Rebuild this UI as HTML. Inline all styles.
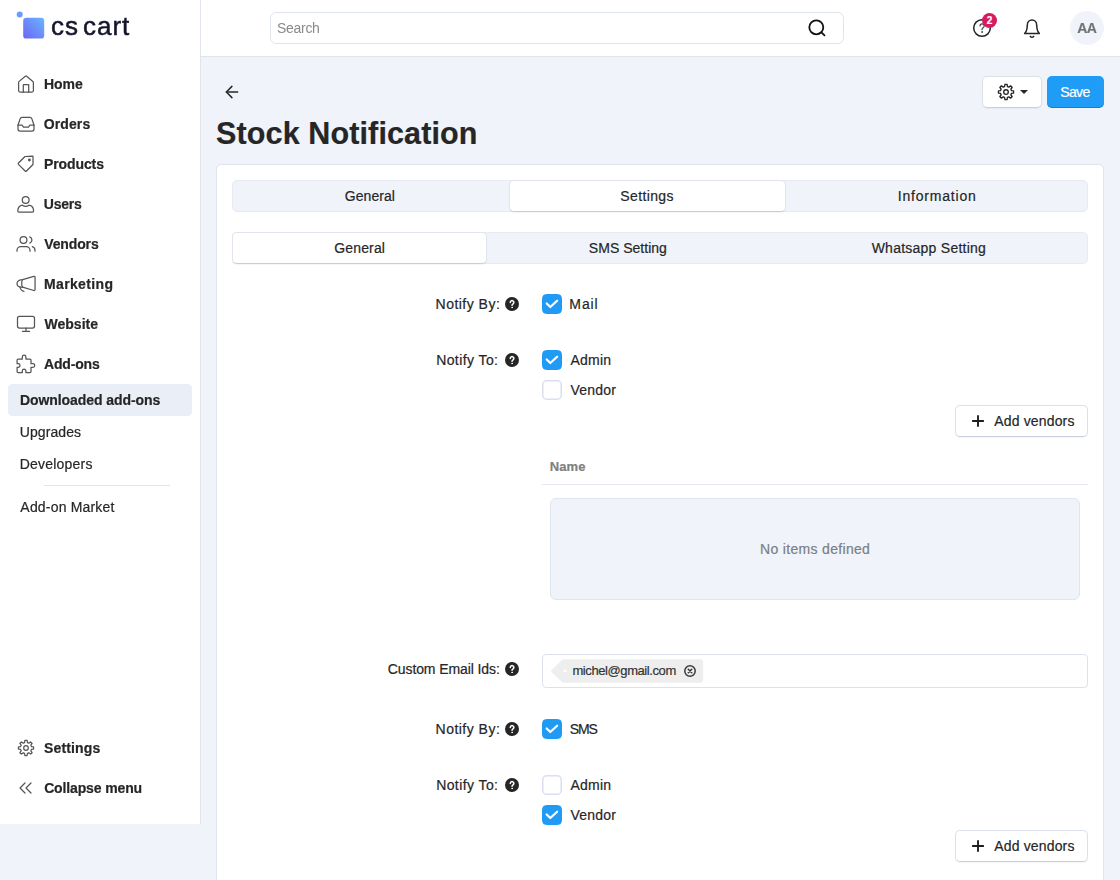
<!DOCTYPE html>
<html><head><meta charset="utf-8"><title>Stock Notification</title>
<style>
*{box-sizing:border-box;margin:0;padding:0}
html,body{width:1120px;height:880px;overflow:hidden;background:#f0f4fa;font-family:"Liberation Sans",sans-serif;color:#262626;font-size:14px}
#side{position:absolute;left:0;top:0;width:201px;height:824px;background:#fff;border-right:1px solid #e1e5eb}
#top{position:absolute;left:201px;top:0;width:919px;height:57px;background:#fff;border-bottom:1px solid #e1e5eb}
.g{will-change:transform}
.t{position:absolute;white-space:nowrap;line-height:20px;font-size:14px;color:#262626;-webkit-text-stroke:.2px}
.b{font-weight:bold}
.ico{position:absolute;width:24px;height:24px}
.ico svg{position:absolute;left:0;top:0;width:24px;height:24px;fill:none;stroke:#555;stroke-width:1.25;stroke-linecap:round;stroke-linejoin:round;overflow:visible}
#search{position:absolute;left:270px;top:12px;width:574px;height:32px;border:1px solid #e0e4eb;border-radius:6px;background:#fff}
.btn{position:absolute;border:1px solid #dbe0e9;border-bottom-color:#c9d0dc;border-radius:5px;background:#fff;box-shadow:0 1px 1px rgba(40,60,100,.05)}
#card{position:absolute;left:216px;top:164px;width:888px;height:730px;background:#fff;border:1px solid #e1e5ec;border-radius:5px}
.tabs{position:absolute;left:232px;width:856px;height:32px;background:#f0f4fa;border:1px solid #e7eaf0;border-radius:5px}
.tabon{position:absolute;height:32px;background:#fff;border:1px solid #e0e4ec;border-bottom-color:#c6cedb;border-radius:5px;box-shadow:0 1px 1px rgba(40,60,100,.05)}
.q{position:absolute;width:14px;height:14px;border-radius:50%;background:#262626}
.q svg{position:absolute;left:0;top:0;width:14px;height:14px}
.cb{position:absolute;left:542px;width:20px;height:20px;border-radius:4.5px;border:1.5px solid #d6dced;background:#fff}
.cb.on{background:#1f9bf5;border-color:#1f9bf5}
.cb svg{position:absolute;left:-1.5px;top:-1.5px;width:20px;height:20px;fill:none;stroke:#fff;stroke-width:2.2;stroke-linecap:round;stroke-linejoin:round}
</style></head><body>
<div id="side"></div><div id="top"></div>
<svg style="position:absolute;left:14px;top:8px" width="36" height="36" viewBox="0 0 36 36"><defs><linearGradient id="lg" x1="0" y1="1" x2="1" y2="0"><stop offset="0" stop-color="#6b66f6"/><stop offset="1" stop-color="#6bb4ff"/></linearGradient></defs><circle cx="5.7" cy="6.4" r="3" fill="#6c9bfb"/><rect x="9.2" y="9.8" width="21" height="20.8" rx="3.2" fill="url(#lg)"/></svg>
<div class="t g" id="logo" style="left:51px;top:11px;font-size:26px;line-height:30px;color:#14162b;letter-spacing:.95px;word-spacing:-4px;-webkit-text-stroke:.5px #14162b">cs cart</div>
<div class="ico" style="left:14px;top:72px"><svg viewBox="0 0 24 24"><path d="M4.6 10.6 a1.6 1.6 0 0 1 .55 -1.2 L11.3 4.2 a1 1 0 0 1 1.4 0 L18.85 9.4 a1.6 1.6 0 0 1 .55 1.2 V18.6 a1.5 1.5 0 0 1 -1.5 1.5 H6.1 a1.5 1.5 0 0 1 -1.5 -1.5 Z"/><path d="M9.3 20 V13 a.4 .4 0 0 1 .4 -.4 h4.6 a.4 .4 0 0 1 .4 .4 V20"/></svg></div>
<div class="t b g" style="left:43px;padding-left:0.96px;top:74px;letter-spacing:-0.060px;">Home</div>
<div class="ico" style="left:14px;top:112px"><svg viewBox="0 0 24 24"><path d="M4 13 L6.2 6.6 A2 2 0 0 1 8.1 5.3 H15.9 A2 2 0 0 1 17.8 6.6 L20 13 V17 a2 2 0 0 1 -2 2 H6 a2 2 0 0 1 -2 -2 Z"/><path d="M4 13 H8 l1.5 2.2 h5 L16 13 H20"/></svg></div>
<div class="t b g" style="left:43px;padding-left:0.83px;top:114px;letter-spacing:0.088px;">Orders</div>
<div class="ico" style="left:14px;top:152px"><svg viewBox="0 0 24 24"><g transform="translate(0,-1)"><path d="M4.5 12 L11 5.5 L18.4 5.2 a.6 .6 0 0 1 .6 .6 V13.5 L12.5 20 a1 1 0 0 1 -1.4 0 L4.5 13.4 a1 1 0 0 1 0 -1.4 Z"/><circle cx="15.4" cy="9" r="0.8" fill="#555"/></g></svg></div>
<div class="t b g" style="left:43px;padding-left:0.96px;top:154px;letter-spacing:-0.095px;">Products</div>
<div class="ico" style="left:14px;top:192px"><svg viewBox="0 0 24 24"><circle cx="11.7" cy="8" r="3.4"/><path d="M3.8 19 C3.8 16 5.8 13.7 8.4 13.2 C10.3 14.5 13.1 14.5 15 13.2 C17.6 13.7 19.6 16 19.6 19 a1.1 1.1 0 0 1 -1.1 1.1 H4.9 a1.1 1.1 0 0 1 -1.1 -1.1 Z"/></svg></div>
<div class="t b g" style="left:43px;padding-left:0.76px;top:194px;letter-spacing:-0.200px;">Users</div>
<div class="ico" style="left:14px;top:232px"><svg viewBox="0 0 24 24"><circle cx="9.5" cy="8" r="3.4"/><path d="M3 19.2 v-.9 a3.8 3.8 0 0 1 3.8 -3.8 h5.4 a3.8 3.8 0 0 1 3.8 3.8 V19.2"/><path d="M15.8 4.8 a3.4 3.4 0 0 1 0 6.3"/><path d="M21 19.2 v-.9 a3.9 3.9 0 0 0 -2.7 -3.6"/></svg></div>
<div class="t b g" style="left:44px;padding-left:0.20px;top:234px;letter-spacing:-0.124px;">Vendors</div>
<div class="ico" style="left:14px;top:272px"><svg viewBox="0 0 24 24"><path d="M8.6 7.6 L19.8 4.4 a1 1 0 0 1 1.25 1 V17.5 a1 1 0 0 1 -1.25 1 L8.6 15.2 C5.2 15.2 3 13.6 3 11.4 C3 9.2 5.2 7.6 8.6 7.6 Z"/><path d="M8.6 7.6 C7.4 9.2 7.4 13.6 8.6 15.2"/><path d="M6 15 C6.4 17.3 7.8 18.9 9.9 19.3"/></svg></div>
<div class="t b g" style="left:43px;padding-left:0.96px;top:274px;letter-spacing:0.369px;">Marketing</div>
<div class="ico" style="left:14px;top:312px"><svg viewBox="0 0 24 24"><rect x="3.5" y="4.4" width="17" height="11.6" rx="2"/><path d="M8.5 19.4 h7"/><path d="M12 16 V19.4"/></svg></div>
<div class="t b g" style="left:44px;padding-left:0.39px;top:314px;letter-spacing:0.053px;">Website</div>
<div class="ico" style="left:14px;top:352px"><svg viewBox="0 0 24 24"><path d="M4.1 7.1 H8.3 V5 a1.8 1.8 0 0 1 3.6 0 V7.1 H16 a1 1 0 0 1 1 1 V11.7 H18.9 a1.8 1.8 0 0 1 0 3.6 H17 V19.6 a1 1 0 0 1 -1 1 H11.9 V19 a1.8 1.8 0 0 0 -3.6 0 V20.6 H4.1 a1 1 0 0 1 -1 -1 V15.3 H4.2 a1.8 1.8 0 0 0 0 -3.6 H3.1 V8.1 a1 1 0 0 1 1 -1 Z"/></svg></div>
<div class="t b g" style="left:44px;padding-left:0.05px;top:354px;letter-spacing:-0.190px;">Add-ons</div>
<div class="ico" style="left:14px;top:736px"><svg viewBox="0 0 24 24"><path d="M10.55 6.59L10.88 4.48A7.6 7.6 0 0 1 13.12 4.48L13.45 6.59A5.6 5.6 0 0 1 14.80 7.15L16.52 5.89A7.6 7.6 0 0 1 18.11 7.48L16.85 9.20A5.6 5.6 0 0 1 17.41 10.55L19.52 10.88A7.6 7.6 0 0 1 19.52 13.12L17.41 13.45A5.6 5.6 0 0 1 16.85 14.80L18.11 16.52A7.6 7.6 0 0 1 16.52 18.11L14.80 16.85A5.6 5.6 0 0 1 13.45 17.41L13.12 19.52A7.6 7.6 0 0 1 10.88 19.52L10.55 17.41A5.6 5.6 0 0 1 9.20 16.85L7.48 18.11A7.6 7.6 0 0 1 5.89 16.52L7.15 14.80A5.6 5.6 0 0 1 6.59 13.45L4.48 13.12A7.6 7.6 0 0 1 4.48 10.88L6.59 10.55A5.6 5.6 0 0 1 7.15 9.20L5.89 7.48A7.6 7.6 0 0 1 7.48 5.89L9.20 7.15A5.6 5.6 0 0 1 10.55 6.59Z"/><circle cx="12" cy="12" r="2.3"/></svg></div>
<div class="t b g" style="left:43px;padding-left:1.00px;top:738px;letter-spacing:0.136px;">Settings</div>
<div class="ico" style="left:14px;top:776px"><svg viewBox="0 0 24 24"><path d="M11 7 L6 12 L11 17"/><path d="M17 7 L12 12 L17 17"/></svg></div>
<div class="t b g" style="left:44px;padding-left:0.13px;top:778px;letter-spacing:-0.132px;">Collapse menu</div>
<div style="position:absolute;left:8px;top:384px;width:184px;height:32px;background:#eaeff7;border-radius:4.5px"></div>
<div class="t b g" style="left:19px;padding-left:0.96px;top:390px;letter-spacing:-0.067px;">Downloaded add-ons</div>
<div class="t g" style="left:19px;padding-left:0.82px;top:422px;letter-spacing:0.069px;">Upgrades</div>
<div class="t g" style="left:19px;padding-left:0.75px;top:454px;letter-spacing:0.205px;">Developers</div>
<div style="position:absolute;left:44px;top:485px;width:126px;height:1px;background:#dfe4ee"></div>
<div class="t g" style="left:20px;padding-left:0.37px;top:497px;letter-spacing:0.184px;">Add-on Market</div>
<div id="search"></div>
<div class="t g" style="left:276px;padding-left:0.96px;top:18px;letter-spacing:-0.283px;color:#8a8a8a;-webkit-text-stroke:0;">Search</div>
<svg style="position:absolute;left:805px;top:16px" width="24" height="24" viewBox="0 0 24 24" fill="none" stroke="#111" stroke-width="1.8" stroke-linecap="round"><circle cx="11.3" cy="11.3" r="7"/><path d="M16.4 16.4 L19.5 19.4"/></svg>
<svg style="position:absolute;left:970px;top:16px" width="24" height="24" viewBox="0 0 24 24" fill="none" stroke="#262626" stroke-width="1.5" stroke-linecap="round" stroke-linejoin="round"><circle cx="12" cy="12" r="8.3"/><path stroke-width="1.25" stroke="#444" d="M10 9.9 a2.1 2.1 0 1 1 3.2 1.8 c-.8 .5 -1.2 .9 -1.2 1.8"/><circle cx="12" cy="16" r=".5" fill="#444" stroke="#444" stroke-width=".8"/></svg>
<div style="position:absolute;left:982px;top:13px;width:15px;height:15px;border-radius:50%;background:#d81b60"></div>
<div class="t b" style="left:982px;top:13px;width:15px;text-align:center;font-size:10px;line-height:15px;color:#fff">2</div>
<svg style="position:absolute;left:1020px;top:16px" width="24" height="24" viewBox="0 0 24 24" fill="none" stroke="#262626" stroke-width="1.5" stroke-linecap="round" stroke-linejoin="round"><path d="M4.6 17.5 h14.8 c-1.3 -1.2 -2.1 -2.8 -2.4 -5 L16.6 8.5 a4.6 4.6 0 0 0 -9.2 0 L7 12.5 c-.3 2.2 -1.1 3.8 -2.4 5 Z"/><path d="M10.3 20.3 a2 2 0 0 0 3.4 0"/></svg>
<div style="position:absolute;left:1070px;top:11px;width:34px;height:34px;border-radius:50%;background:#f0f4fa"></div>
<div class="t b g" style="left:1077px;padding-left:0.15px;top:18px;letter-spacing:-0.403px;color:#727272;">AA</div>
<svg style="position:absolute;left:220px;top:80px" width="24" height="24" viewBox="0 0 24 24" fill="none" stroke="#262626" stroke-width="1.5" stroke-linecap="round" stroke-linejoin="round"><path d="M6.4 12 H17.6"/><path d="M11.9 6.4 L6.4 12 L11.9 17.6"/></svg>
<div class="btn" style="left:982px;top:76px;width:59.5px;height:32px"></div>
<svg style="position:absolute;left:994px;top:80px" width="24" height="24" viewBox="0 0 24 24" fill="none" stroke="#262626" stroke-width="1.35" stroke-linecap="round" stroke-linejoin="round"><path d="M10.55 6.59L10.88 4.48A7.6 7.6 0 0 1 13.12 4.48L13.45 6.59A5.6 5.6 0 0 1 14.80 7.15L16.52 5.89A7.6 7.6 0 0 1 18.11 7.48L16.85 9.20A5.6 5.6 0 0 1 17.41 10.55L19.52 10.88A7.6 7.6 0 0 1 19.52 13.12L17.41 13.45A5.6 5.6 0 0 1 16.85 14.80L18.11 16.52A7.6 7.6 0 0 1 16.52 18.11L14.80 16.85A5.6 5.6 0 0 1 13.45 17.41L13.12 19.52A7.6 7.6 0 0 1 10.88 19.52L10.55 17.41A5.6 5.6 0 0 1 9.20 16.85L7.48 18.11A7.6 7.6 0 0 1 5.89 16.52L7.15 14.80A5.6 5.6 0 0 1 6.59 13.45L4.48 13.12A7.6 7.6 0 0 1 4.48 10.88L6.59 10.55A5.6 5.6 0 0 1 7.15 9.20L5.89 7.48A7.6 7.6 0 0 1 7.48 5.89L9.20 7.15A5.6 5.6 0 0 1 10.55 6.59Z"/><circle cx="12" cy="12" r="2.3"/></svg>
<div style="position:absolute;left:1020px;top:90px;width:0;height:0;border-left:4.5px solid transparent;border-right:4.5px solid transparent;border-top:4.5px solid #262626"></div>
<div style="position:absolute;left:1047px;top:76px;width:57px;height:32px;border-radius:5px;background:#1f9cf6;box-shadow:inset 0 -1px 0 rgba(0,70,160,.35)"></div>
<div class="t" style="left:1060px;padding-left:0.16px;top:82px;letter-spacing:-0.584px;color:#fff;">Save</div>
<div class="t b" style="left:216px;padding-left:0.12px;top:112.5px;letter-spacing:0.118px;font-size:30.5px;line-height:40px;">Stock Notification</div>
<div id="card"></div>
<div class="tabs" style="top:180px"></div><div class="tabon" style="left:508.5px;top:180px;width:277px"></div>
<div class="t" style="left:344px;padding-left:0.80px;top:186px;letter-spacing:0.056px;">General</div>
<div class="t" style="left:620px;padding-left:0.36px;top:186px;letter-spacing:0.365px;">Settings</div>
<div class="t" style="left:897px;padding-left:0.81px;top:186px;letter-spacing:0.797px;">Information</div>
<div class="tabs" style="top:232px"></div><div class="tabon" style="left:232px;top:232px;width:254.5px"></div>
<div class="t" style="left:334px;padding-left:0.30px;top:238px;letter-spacing:0.139px;">General</div>
<div class="t" style="left:588px;padding-left:0.86px;top:238px;letter-spacing:0.022px;">SMS Setting</div>
<div class="t" style="left:871px;padding-left:0.64px;top:238px;letter-spacing:0.250px;">Whatsapp Setting</div>
<div class="t" style="left:435px;padding-left:0.55px;top:294px;letter-spacing:0.480px;">Notify By:</div>
<div class="q" style="left:505px;top:297px"><svg viewBox="0 0 14 14" fill="none" stroke="#fff" stroke-width="1.5" stroke-linecap="round" stroke-linejoin="round"><g transform="translate(7 7.5) scale(1.1) translate(-7 -7.5)"><path stroke-width="1.4" d="M5.45 5.6 a1.6 1.6 0 1 1 2.5 1.3 c-.55 .4 -.9 .7 -.9 1.2"/><circle cx="7.05" cy="10.1" r=".35" fill="#fff" stroke-width=".85"/></g></svg></div>
<div class="cb on" style="top:294px"><svg viewBox="0 0 20 20"><path d="M4.7 9.5 L8.3 13 L15.1 6.7"/></svg></div>
<div class="t" style="left:569px;padding-left:0.35px;top:294px;letter-spacing:0.905px;">Mail</div>
<div class="t" style="left:436px;padding-left:0.15px;top:350px;letter-spacing:0.414px;">Notify To:</div>
<div class="q" style="left:505px;top:353px"><svg viewBox="0 0 14 14" fill="none" stroke="#fff" stroke-width="1.5" stroke-linecap="round" stroke-linejoin="round"><g transform="translate(7 7.5) scale(1.1) translate(-7 -7.5)"><path stroke-width="1.4" d="M5.45 5.6 a1.6 1.6 0 1 1 2.5 1.3 c-.55 .4 -.9 .7 -.9 1.2"/><circle cx="7.05" cy="10.1" r=".35" fill="#fff" stroke-width=".85"/></g></svg></div>
<div class="cb on" style="top:350px"><svg viewBox="0 0 20 20"><path d="M4.7 9.5 L8.3 13 L15.1 6.7"/></svg></div>
<div class="t" style="left:570px;padding-left:0.47px;top:350px;letter-spacing:0.238px;">Admin</div>
<svg style="position:absolute;left:542px;top:380px" width="20" height="20" viewBox="0 0 20 20"><rect x=".75" y=".75" width="18.5" height="18.5" rx="4" fill="#fff" stroke="#d9dfee" stroke-width="1.5"/></svg>
<div class="t" style="left:570px;padding-left:0.44px;top:380px;letter-spacing:0.230px;">Vendor</div>
<div class="btn" style="left:954.5px;top:405px;width:133.5px;height:32px"></div>
<svg style="position:absolute;left:970px;top:413px" width="16" height="16" viewBox="0 0 16 16" fill="none" stroke="#1f1f1f" stroke-width="1.9"><path d="M8 2.3 V13.7 M2.1 8 H13.9"/></svg>
<div class="t" style="left:994px;padding-left:0.37px;top:411px;letter-spacing:0.143px;">Add vendors</div>
<div class="t b" style="left:549px;padding-left:0.83px;top:457px;letter-spacing:0.069px;font-size:13px;color:#7f7f7f;">Name</div>
<div style="position:absolute;left:542px;top:484px;width:546px;height:1px;background:#e3e8f1"></div>
<div style="position:absolute;left:550px;top:498px;width:530px;height:102px;background:#f0f4fa;border:1px solid #dfe5ee;border-radius:6px"></div>
<div class="t" style="left:760px;padding-left:0.05px;top:539px;letter-spacing:0.320px;color:#7a7e86;">No items defined</div>
<div class="t" style="left:387px;padding-left:0.79px;top:659px;letter-spacing:-0.100px;">Custom Email Ids:</div>
<div class="q" style="left:505px;top:662px"><svg viewBox="0 0 14 14" fill="none" stroke="#fff" stroke-width="1.5" stroke-linecap="round" stroke-linejoin="round"><g transform="translate(7 7.5) scale(1.1) translate(-7 -7.5)"><path stroke-width="1.4" d="M5.45 5.6 a1.6 1.6 0 1 1 2.5 1.3 c-.55 .4 -.9 .7 -.9 1.2"/><circle cx="7.05" cy="10.1" r=".35" fill="#fff" stroke-width=".85"/></g></svg></div>
<div style="position:absolute;left:542px;top:654px;width:546px;height:34px;background:#fff;border:1px solid #dce1ea;border-radius:4px"></div>
<svg style="position:absolute;left:551px;top:659px" width="153" height="24" viewBox="0 0 153 24"><path d="M12.5 .3 H149.2 a3 3 0 0 1 3 3 V20.7 a3 3 0 0 1 -3 3 H12.5 a2 2 0 0 1 -1.5 -.7 L.6 12.9 a1.3 1.3 0 0 1 0 -1.8 L11 1 a2 2 0 0 1 1.5 -.7 Z" fill="#eeeeee"/><circle cx="13.9" cy="12" r="1.6" fill="#fff"/></svg>
<div class="t" style="left:572px;padding-left:0.44px;top:661px;letter-spacing:-0.412px;font-size:13px;color:#333;">michel@gmail.com</div>
<svg style="position:absolute;left:682.8px;top:664px" width="14" height="14" viewBox="0 0 14 14" fill="none" stroke="#3a3a3a" stroke-width="1.5" stroke-linecap="round"><circle cx="7" cy="7" r="5.2"/><path stroke-width="1.6" d="M5.3 5.3 L8.7 8.7 M8.7 5.3 L5.3 8.7"/></svg>
<div class="t" style="left:435px;padding-left:0.55px;top:719px;letter-spacing:0.480px;">Notify By:</div>
<div class="q" style="left:505px;top:722px"><svg viewBox="0 0 14 14" fill="none" stroke="#fff" stroke-width="1.5" stroke-linecap="round" stroke-linejoin="round"><g transform="translate(7 7.5) scale(1.1) translate(-7 -7.5)"><path stroke-width="1.4" d="M5.45 5.6 a1.6 1.6 0 1 1 2.5 1.3 c-.55 .4 -.9 .7 -.9 1.2"/><circle cx="7.05" cy="10.1" r=".35" fill="#fff" stroke-width=".85"/></g></svg></div>
<div class="cb on" style="top:719px"><svg viewBox="0 0 20 20"><path d="M4.7 9.5 L8.3 13 L15.1 6.7"/></svg></div>
<div class="t" style="left:569px;padding-left:0.86px;top:719px;letter-spacing:-1.180px;">SMS</div>
<div class="t" style="left:436px;padding-left:0.15px;top:775px;letter-spacing:0.414px;">Notify To:</div>
<div class="q" style="left:505px;top:778px"><svg viewBox="0 0 14 14" fill="none" stroke="#fff" stroke-width="1.5" stroke-linecap="round" stroke-linejoin="round"><g transform="translate(7 7.5) scale(1.1) translate(-7 -7.5)"><path stroke-width="1.4" d="M5.45 5.6 a1.6 1.6 0 1 1 2.5 1.3 c-.55 .4 -.9 .7 -.9 1.2"/><circle cx="7.05" cy="10.1" r=".35" fill="#fff" stroke-width=".85"/></g></svg></div>
<svg style="position:absolute;left:542px;top:775px" width="20" height="20" viewBox="0 0 20 20"><rect x=".75" y=".75" width="18.5" height="18.5" rx="4" fill="#fff" stroke="#d9dfee" stroke-width="1.5"/></svg>
<div class="t" style="left:570px;padding-left:0.47px;top:775px;letter-spacing:0.238px;">Admin</div>
<div class="cb on" style="top:805px"><svg viewBox="0 0 20 20"><path d="M4.7 9.5 L8.3 13 L15.1 6.7"/></svg></div>
<div class="t" style="left:570px;padding-left:0.44px;top:805px;letter-spacing:0.230px;">Vendor</div>
<div class="btn" style="left:954.5px;top:830px;width:133.5px;height:32px"></div>
<svg style="position:absolute;left:970px;top:838px" width="16" height="16" viewBox="0 0 16 16" fill="none" stroke="#1f1f1f" stroke-width="1.9"><path d="M8 2.3 V13.7 M2.1 8 H13.9"/></svg>
<div class="t" style="left:994px;padding-left:0.37px;top:836px;letter-spacing:0.143px;">Add vendors</div>
</body></html>
